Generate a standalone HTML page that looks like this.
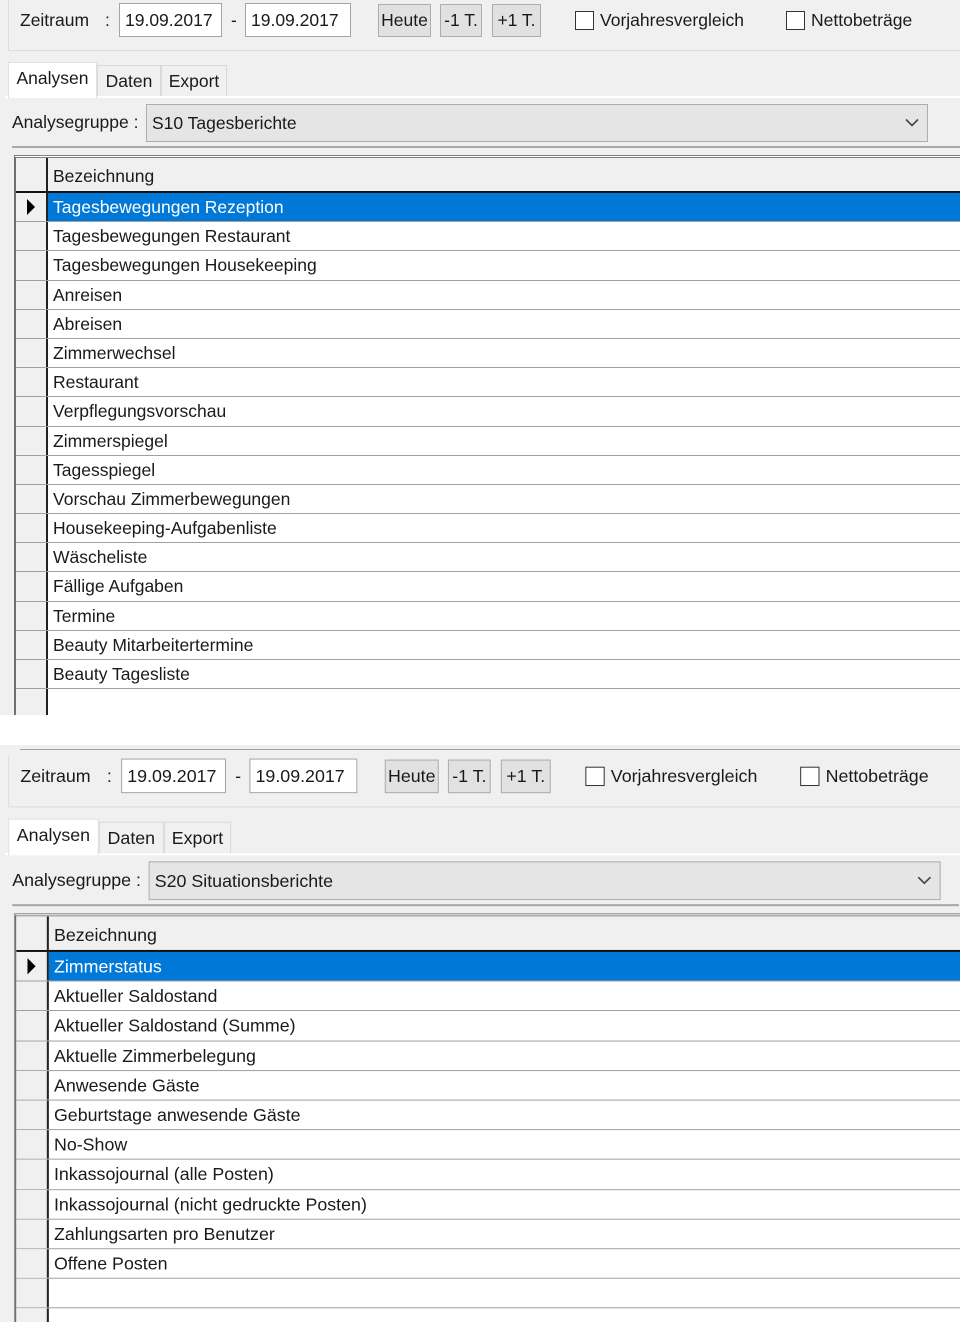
<!DOCTYPE html>
<html><head><meta charset="utf-8"><style>
*{margin:0;padding:0;box-sizing:border-box}
html,body{overflow:hidden}
body{width:960px;height:1322px;background:#fff;position:relative;overflow:hidden;font-family:"Liberation Sans",sans-serif;color:#1a1a1a}
.clip{position:absolute;left:0;width:960px;overflow:hidden;background:#f0f0f0}
.p{position:absolute;left:0;top:0;width:960px;height:555px;transform-origin:0 0;overflow:hidden}
.a{position:absolute;white-space:nowrap}
.t{font-size:17.5px;line-height:20px}
.inp{background:#fff;border:1px solid #a5a5a5;font-size:17.5px;line-height:32px;padding-left:5px}
.btn{background:#e1e1e1;border:1px solid #adadad;font-size:17.5px;line-height:31px;text-align:center}
.cb{width:19px;height:19px;border:1px solid #333;background:#fff}
.tab{border:1px solid #d9d9d9;border-bottom:none;background:#f0f0f0;font-size:17.5px;text-align:center;line-height:30px}
.grid{position:absolute;left:14px;top:155px;width:946px;height:560px;overflow:hidden;border-left:2px solid #707070;border-top:3px double #808080;background:#fff}
.row{position:relative;height:29.2px;border-bottom:1px solid #a0a0a0;font-size:17.5px;line-height:28px}
.row .ind{position:absolute;left:0;top:0;width:32px;height:100%;background:#f0f0f0;border-right:2px solid #222}
.row span{position:absolute;left:37px}
.hdr{height:35px;background:#f0f0f0;border-bottom:2px solid #111;line-height:36px}
.sel{background:#0078d7;color:#fff}
</style></head><body>

<div class="clip" style="top:0;height:715px">
<div class="p" style="height:715px">
<div class="a" style="left:8px;top:-10px;width:980px;height:61px;border:1px solid #dcdcdc"></div>
<div class="a t" style="left:20px;top:10px">Zeitraum</div>
<div class="a t" style="left:105px;top:10px">:</div>
<div class="a inp" style="left:119px;top:3px;width:103px;height:34px">19.09.2017</div>
<div class="a t" style="left:231px;top:10px">-</div>
<div class="a inp" style="left:245px;top:3px;width:106px;height:34px">19.09.2017</div>
<div class="a btn" style="left:378px;top:4px;width:53px;height:33px">Heute</div>
<div class="a btn" style="left:440px;top:4px;width:42px;height:33px">-1 T.</div>
<div class="a btn" style="left:492px;top:4px;width:49px;height:33px">+1 T.</div>
<div class="a cb" style="left:575px;top:11px"></div>
<div class="a t" style="left:600px;top:10px">Vorjahresvergleich</div>
<div class="a cb" style="left:786px;top:11px"></div>
<div class="a t" style="left:811px;top:10px">Nettobeträge</div>
<div class="a" style="left:5px;top:96px;width:955px;height:2px;background:#fff"></div>
<div class="a tab" style="left:8px;top:62px;width:89px;height:36px;background:#fff;border-color:#e0e0e0">Analysen</div>
<div class="a tab" style="left:97px;top:65px;width:64px;height:31px">Daten</div>
<div class="a tab" style="left:161px;top:65px;width:66px;height:31px">Export</div>
<div class="a t" style="left:12px;top:112px">Analysegruppe :</div>
<div class="a" style="left:146px;top:104px;width:782px;height:38px;background:#e5e5e5;border:1px solid #adadad;font-size:17.5px;line-height:36px;padding-left:5px">S10 Tagesberichte
<svg style="position:absolute;right:8px;top:13px" width="14" height="9" viewBox="0 0 14 9"><path d="M1 1.5 L7 7.5 L13 1.5" fill="none" stroke="#444" stroke-width="1.6"/></svg></div>
<div class="a" style="left:12px;top:146px;width:948px;height:2px;background:#a8a8a8"></div>
<div class="grid">
<div class="row hdr"><div class="ind"></div><span>Bezeichnung</span></div>
<div class="row sel"><div class="ind"><svg style="position:absolute;left:10px;top:6px" width="10" height="16"><path d="M1 0 L9 8 L1 16Z" fill="#000"/></svg></div><span>Tagesbewegungen Rezeption</span></div>
<div class="row"><div class="ind"></div><span>Tagesbewegungen Restaurant</span></div>
<div class="row"><div class="ind"></div><span>Tagesbewegungen Housekeeping</span></div>
<div class="row"><div class="ind"></div><span>Anreisen</span></div>
<div class="row"><div class="ind"></div><span>Abreisen</span></div>
<div class="row"><div class="ind"></div><span>Zimmerwechsel</span></div>
<div class="row"><div class="ind"></div><span>Restaurant</span></div>
<div class="row"><div class="ind"></div><span>Verpflegungsvorschau</span></div>
<div class="row"><div class="ind"></div><span>Zimmerspiegel</span></div>
<div class="row"><div class="ind"></div><span>Tagesspiegel</span></div>
<div class="row"><div class="ind"></div><span>Vorschau Zimmerbewegungen</span></div>
<div class="row"><div class="ind"></div><span>Housekeeping-Aufgabenliste</span></div>
<div class="row"><div class="ind"></div><span>Wäscheliste</span></div>
<div class="row"><div class="ind"></div><span>Fällige Aufgaben</span></div>
<div class="row"><div class="ind"></div><span>Termine</span></div>
<div class="row"><div class="ind"></div><span>Beauty Mitarbeitertermine</span></div>
<div class="row"><div class="ind"></div><span>Beauty Tagesliste</span></div>
<div class="row"><div class="ind"></div><span></span></div>
</div>
</div>
</div>

<div class="clip" style="top:745px;height:577px">
<div class="a" style="left:20px;top:4px;width:940px;height:1px;background:#a0a0a0"></div>
<div class="p" style="height:557px;transform:translateY(10.5px) scale(1.018)">
<div class="a" style="left:8px;top:-6px;width:980px;height:57px;border:1px solid #dcdcdc;border-top:none"></div>
<div class="a t" style="left:20px;top:10px">Zeitraum</div>
<div class="a t" style="left:105px;top:10px">:</div>
<div class="a inp" style="left:119px;top:3px;width:103px;height:34px">19.09.2017</div>
<div class="a t" style="left:231px;top:10px">-</div>
<div class="a inp" style="left:245px;top:3px;width:106px;height:34px">19.09.2017</div>
<div class="a btn" style="left:378px;top:4px;width:53px;height:33px">Heute</div>
<div class="a btn" style="left:440px;top:4px;width:42px;height:33px">-1 T.</div>
<div class="a btn" style="left:492px;top:4px;width:49px;height:33px">+1 T.</div>
<div class="a cb" style="left:575px;top:11px"></div>
<div class="a t" style="left:600px;top:10px">Vorjahresvergleich</div>
<div class="a cb" style="left:786px;top:11px"></div>
<div class="a t" style="left:811px;top:10px">Nettobeträge</div>
<div class="a" style="left:5px;top:96px;width:940px;height:2px;background:#fff"></div>
<div class="a tab" style="left:8px;top:62px;width:89px;height:36px;background:#fff;border-color:#e0e0e0">Analysen</div>
<div class="a tab" style="left:97px;top:65px;width:64px;height:31px">Daten</div>
<div class="a tab" style="left:161px;top:65px;width:66px;height:31px">Export</div>
<div class="a t" style="left:12px;top:112px">Analysegruppe :</div>
<div class="a" style="left:146px;top:104px;width:778px;height:38px;background:#e5e5e5;border:1px solid #adadad;font-size:17.5px;line-height:36px;padding-left:5px">S20 Situationsberichte
<svg style="position:absolute;right:8px;top:13px" width="14" height="9" viewBox="0 0 14 9"><path d="M1 1.5 L7 7.5 L13 1.5" fill="none" stroke="#444" stroke-width="1.6"/></svg></div>
<div class="a" style="left:12px;top:146px;width:930px;height:2px;background:#a8a8a8"></div>
<div class="grid" style="height:402px;width:930px">
<div class="row hdr"><div class="ind"></div><span>Bezeichnung</span></div>
<div class="row sel"><div class="ind"><svg style="position:absolute;left:10px;top:6px" width="10" height="16"><path d="M1 0 L9 8 L1 16Z" fill="#000"/></svg></div><span>Zimmerstatus</span></div>
<div class="row"><div class="ind"></div><span>Aktueller Saldostand</span></div>
<div class="row"><div class="ind"></div><span>Aktueller Saldostand (Summe)</span></div>
<div class="row"><div class="ind"></div><span>Aktuelle Zimmerbelegung</span></div>
<div class="row"><div class="ind"></div><span>Anwesende Gäste</span></div>
<div class="row"><div class="ind"></div><span>Geburtstage anwesende Gäste</span></div>
<div class="row"><div class="ind"></div><span>No-Show</span></div>
<div class="row"><div class="ind"></div><span>Inkassojournal (alle Posten)</span></div>
<div class="row"><div class="ind"></div><span>Inkassojournal (nicht gedruckte Posten)</span></div>
<div class="row"><div class="ind"></div><span>Zahlungsarten pro Benutzer</span></div>
<div class="row"><div class="ind"></div><span>Offene Posten</span></div>
<div class="row"><div class="ind"></div><span></span></div>
<div class="row"><div class="ind"></div><span></span></div>
</div>
</div>
</div>
</body></html>
